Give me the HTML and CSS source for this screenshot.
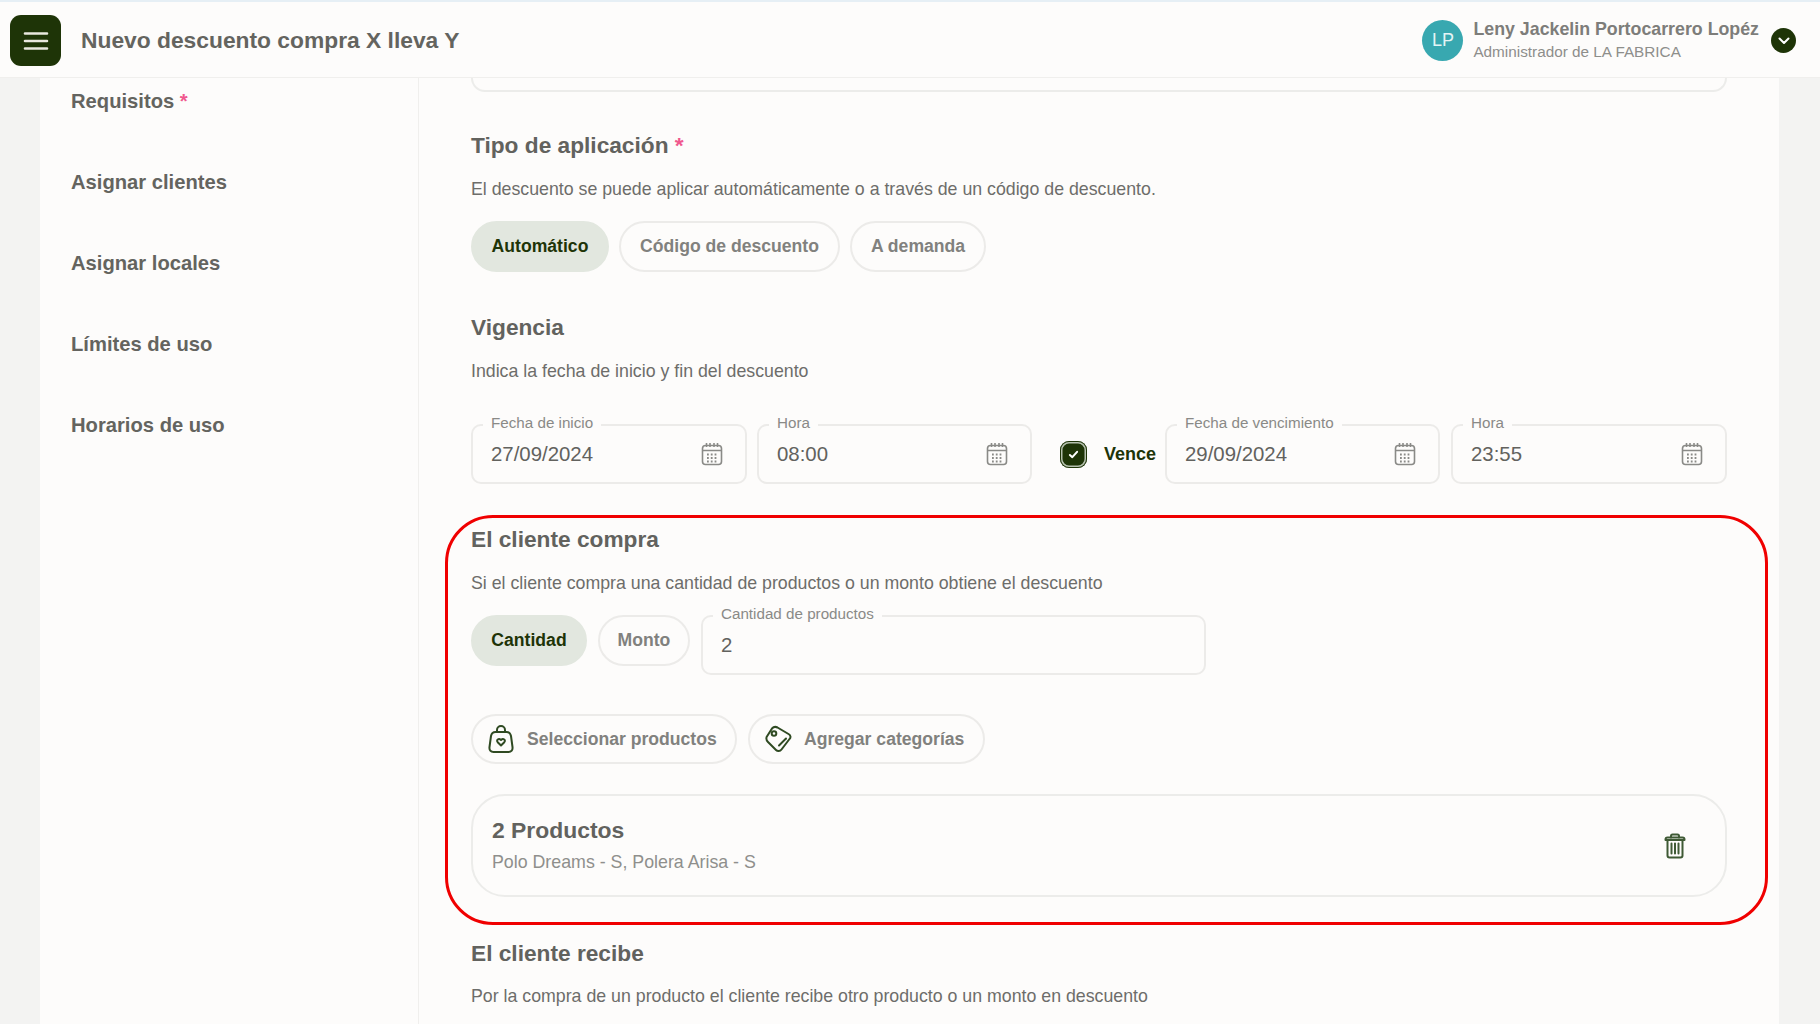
FILE: index.html
```html
<!DOCTYPE html>
<html lang="es">
<head>
<meta charset="utf-8">
<title>Nuevo descuento compra X lleva Y</title>
<link rel="stylesheet" href="styles.css">
</head>
<body>
<header class="topbar">
  <button class="menu-btn" aria-label="Menú">
    <svg width="26" height="20" viewBox="0 0 26 20" fill="none" stroke="#e9e8df" stroke-width="2.6" stroke-linecap="round"><path d="M2 2.5h22M2 10h22M2 17.5h22"/></svg>
  </button>
  <h1 class="page-title">Nuevo descuento compra X lleva Y</h1>
  <div class="user">
    <div class="avatar">LP</div>
    <div class="user-text">
      <div class="user-name">Leny Jackelin Portocarrero Lopéz</div>
      <div class="user-role">Administrador de LA FABRICA</div>
    </div>
    <div class="user-toggle">
      <svg width="12" height="8" viewBox="0 0 12 8" fill="none" stroke="#fff" stroke-width="2" stroke-linecap="round" stroke-linejoin="round"><path d="M1.5 1.5 6 6l4.5-4.5"/></svg>
    </div>
  </div>
</header>

<div class="stage">
  <div class="panel">
    <nav class="side">
      <a class="side-link">Requisitos <span class="req">*</span></a>
      <a class="side-link">Asignar clientes</a>
      <a class="side-link">Asignar locales</a>
      <a class="side-link">Límites de uso</a>
      <a class="side-link">Horarios de uso</a>
    </nav>
    <main class="content">
      <div class="cut-box"></div>

      <section class="sec sec-tipo">
        <h2 class="sec-title">Tipo de aplicación <span class="req">*</span></h2>
        <p class="sec-desc">El descuento se puede aplicar automáticamente o a través de un código de descuento.</p>
        <div class="pills">
          <span class="pill pill-on pill-auto">Automático</span>
          <span class="pill pill-code">Código de descuento</span>
          <span class="pill pill-dem">A demanda</span>
        </div>
      </section>

      <section class="sec sec-vig">
        <h2 class="sec-title">Vigencia</h2>
        <p class="sec-desc">Indica la fecha de inicio y fin del descuento</p>
        <div class="dates">
          <div class="field f-date1"><span class="f-label">Fecha de inicio</span><span class="f-value">27/09/2024</span>
            <svg class="cal" viewBox="0 0 22 24" fill="none" stroke="#8a8a87" stroke-width="1.6"><rect x="1.5" y="3.5" width="19" height="19" rx="3"/><path d="M1.5 8.5h19M5.5 1v4M9 1v4M13 1v4M16.5 1v4"/><path stroke-width="1.8" stroke-dasharray="1.8 2" d="M6 12.5h11M6 16h11M6 19.5h11"/></svg></div>
          <div class="field f-hour1"><span class="f-label">Hora</span><span class="f-value">08:00</span>
            <svg class="cal" viewBox="0 0 22 24" fill="none" stroke="#8a8a87" stroke-width="1.6"><rect x="1.5" y="3.5" width="19" height="19" rx="3"/><path d="M1.5 8.5h19M5.5 1v4M9 1v4M13 1v4M16.5 1v4"/><path stroke-width="1.8" stroke-dasharray="1.8 2" d="M6 12.5h11M6 16h11M6 19.5h11"/></svg></div>
          <label class="vence">
            <span class="check"><svg width="11" height="9" viewBox="0 0 12 10" fill="none" stroke="#fff" stroke-width="2.2" stroke-linecap="round" stroke-linejoin="round"><path d="M2 5.5 4.7 8 10 2"/></svg></span>
            <span class="vence-text">Vence</span>
          </label>
          <div class="field f-date2"><span class="f-label">Fecha de vencimiento</span><span class="f-value">29/09/2024</span>
            <svg class="cal" viewBox="0 0 22 24" fill="none" stroke="#8a8a87" stroke-width="1.6"><rect x="1.5" y="3.5" width="19" height="19" rx="3"/><path d="M1.5 8.5h19M5.5 1v4M9 1v4M13 1v4M16.5 1v4"/><path stroke-width="1.8" stroke-dasharray="1.8 2" d="M6 12.5h11M6 16h11M6 19.5h11"/></svg></div>
          <div class="field f-hour2"><span class="f-label">Hora</span><span class="f-value">23:55</span>
            <svg class="cal" viewBox="0 0 22 24" fill="none" stroke="#8a8a87" stroke-width="1.6"><rect x="1.5" y="3.5" width="19" height="19" rx="3"/><path d="M1.5 8.5h19M5.5 1v4M9 1v4M13 1v4M16.5 1v4"/><path stroke-width="1.8" stroke-dasharray="1.8 2" d="M6 12.5h11M6 16h11M6 19.5h11"/></svg></div>
        </div>
      </section>

      <section class="sec sec-compra">
        <div class="highlight"></div>
        <h2 class="sec-title">El cliente compra</h2>
        <p class="sec-desc">Si el cliente compra una cantidad de productos o un monto obtiene el descuento</p>
        <div class="qty-row">
          <span class="pill pill-on pill-cant">Cantidad</span>
          <span class="pill pill-monto">Monto</span>
          <div class="field f-qty"><span class="f-label">Cantidad de productos</span><span class="f-value">2</span></div>
        </div>
        <div class="pick-row">
          <span class="pill pick pick-prod">
            <svg width="26" height="30" viewBox="0 0 26 30" fill="none" stroke="#2f4a22" stroke-width="2" stroke-linecap="round" stroke-linejoin="round"><path d="M9 8V6a4 4 0 0 1 8 0v2"/><path d="M7.5 8h11c2.5 0 4 1.5 4.5 4l1.5 11c.4 3-1.2 5-4 5H5.5c-2.8 0-4.4-2-4-5L3 12c.5-2.5 2-4 4.5-4z"/><path d="M13 21.5l-3.3-3.3c-1.8-2 .9-4.4 3.3-2.2 2.4-2.200 5.100.2 3.300 2.200z"/></svg>
            Seleccionar productos
          </span>
          <span class="pill pick pick-cat">
            <svg width="28" height="28" viewBox="0 0 28 28" fill="none" stroke="#2f4a22" stroke-width="2" stroke-linecap="round" stroke-linejoin="round"><path d="M8 3.5C9.5 1.8 11.5 1.5 13.5 2.5L24.5 9C26.8 10.3 27 12.5 25.5 14L17.5 24.5C16 26.5 13.5 26.5 12 25L4 17C2.5 15.5 2 14 2.6 12Z"/><circle cx="10" cy="8.5" r="2.3"/><path d="M15 20.5l7-7"/></svg>
            Agregar categorías
          </span>
        </div>
        <div class="sel-card">
          <div class="sel-text">
            <div class="sel-title">2 Productos</div>
            <div class="sel-sub">Polo Dreams - S, Polera Arisa - S</div>
          </div>
          <svg class="trash" width="22" height="26" viewBox="0 0 22 26" fill="none" stroke="#3f5a35" stroke-width="2" stroke-linecap="round" stroke-linejoin="round"><path d="M1.5 6.5c0-1.2.8-2 2-2h15c1.2 0 2 .8 2 2v.5h-19z"/><path d="M7 4.5V3c0-1 .6-1.5 1.5-1.5h5C14.4 1.5 15 2 15 3v1.5"/><path d="M3.5 7v15.5c0 1.2.8 2 2 2h11c1.2 0 2-.8 2-2V7"/><path d="M7.5 10.5v10M11 10.500v10M14.500 10.500v10"/></svg>
        </div>
      </section>

      <section class="sec sec-recibe">
        <h2 class="sec-title">El cliente recibe</h2>
        <p class="sec-desc">Por la compra de un producto el cliente recibe otro producto o un monto en descuento</p>
        <div class="field f-next"><span class="f-label">Cantidad de productos</span></div>
      </section>
    </main>
  </div>
</div>
</body>
</html>
```

FILE: styles.css
```css
* { box-sizing: border-box; }
html, body { height: 100%; }
body {
  margin: 0;
  height: 1024px;
  overflow: hidden;
  display: flex;
  flex-direction: column;
  background: #f3f3f2;
  font-family: "Liberation Sans", Arial, sans-serif;
  color: #5f5f5c;
}

.topbar {
  flex: none;
  height: 78px;
  display: flex;
  align-items: center;
  padding: 2px 24px 0 10px;
  background: #fdfcfb;
  border-top: 2px solid #e6eff5;
  border-bottom: 1px solid #f0efed;
  position: relative;
  z-index: 2;
}
.menu-btn {
  width: 51px;
  height: 51px;
  border: 0;
  padding: 0;
  border-radius: 11px;
  background: #1e3407;
  display: flex;
  align-items: center;
  justify-content: center;
}
.page-title {
  margin: 0 0 0 20px;
  font-size: 22.8px;
  font-weight: 700;
  color: #64645f;
}
.user { margin-left: auto; display: flex; align-items: center; }
.avatar {
  width: 41px;
  height: 41px;
  border-radius: 50%;
  background: #38a8b0;
  color: #e4f4f5;
  font-size: 18px;
  display: flex;
  align-items: center;
  justify-content: center;
}
.user-text { margin-left: 10px; }
.user-name { font-size: 17.8px; font-weight: 700; color: #7d7d7a; line-height: 23px; }
.user-role { font-size: 15.3px; color: #8e8e8b; line-height: 22px; }
.user-toggle {
  width: 25px;
  height: 25px;
  margin-left: 12px;
  border-radius: 50%;
  background: #1e3407;
  display: flex;
  align-items: center;
  justify-content: center;
}

.stage { flex: 1; min-height: 0; padding: 0 41px 0 40px; }
.panel { height: 100%; display: flex; background: #fdfcfb; overflow: hidden; }

.side {
  flex: none;
  width: 379px;
  border-right: 1px solid #f0efed;
  padding: 12px 0 0 31px;
  display: flex;
  flex-direction: column;
  gap: 58px;
}
.side-link { display: block; font-size: 20.2px; line-height: 23px; font-weight: 700; color: #64645f; }
.req { color: #f0588e; font-weight: 700; }

.content { flex: 1; min-width: 0; padding: 0 52px 0 52px; }
.cut-box {
  height: 14px;
  border: 2px solid #ececea;
  border-top: 0;
  border-radius: 0 0 14px 14px;
}

.sec { position: relative; }
.sec-title { margin: 0; font-size: 22.7px; line-height: 28px; font-weight: 700; color: #62625e; }
.sec-desc { margin: 0; font-size: 17.75px; line-height: 22px; color: #6d6d6a; }
.sec-title + .sec-desc { margin-top: 19px; }
.sec-recibe .sec-title + .sec-desc { margin-top: 18px; }

.sec-tipo { margin-top: 39px; }
.sec-vig { margin-top: 41px; }
.sec-compra { margin-top: 41px; }
.sec-recibe { margin-top: 42px; }

.pills { display: flex; gap: 10px; margin-top: 21px; }
.pill {
  flex: none;
  display: flex;
  align-items: center;
  justify-content: center;
  height: 51px;
  border: 2px solid #ecebe9;
  border-radius: 26px;
  font-size: 17.6px;
  font-weight: 700;
  color: #81817e;
}
.pill-on { background: #e2e7df; border-color: #e2e7df; color: #1e3407; }
.pill-auto { width: 138px; }
.pill-code { width: 221px; }
.pill-dem { width: 136px; }

.dates { display: flex; align-items: flex-start; margin-top: 42px; }
.field {
  flex: none;
  position: relative;
  display: flex;
  align-items: center;
  height: 60px;
  padding: 0 18px;
  border: 2px solid #ecebe9;
  border-radius: 10px;
}
.f-label {
  position: absolute;
  left: 10px;
  top: -12px;
  padding: 0 8px;
  background: #fdfcfb;
  font-size: 15.2px;
  line-height: 18px;
  color: #8a8a87;
}
.f-value { font-size: 20.4px; color: #62625e; }
.cal { width: 22px; height: 24px; margin-left: auto; margin-right: 4px; }
.f-date1 { width: 276px; }
.f-hour1 { width: 275px; margin-left: 10px; }
.f-date2 { width: 275px; }
.f-hour2 { width: 276px; margin-left: 11px; }
.vence { flex: none; width: 133px; height: 60px; display: flex; align-items: center; padding-left: 28px; }
.check {
  width: 27px;
  height: 27px;
  border-radius: 9px;
  background: #1e3407;
  box-shadow: inset 0 0 0 1px #1e3407, inset 0 0 0 2.5px #b5c0ae;
  display: flex;
  align-items: center;
  justify-content: center;
}
.vence-text { margin-left: 17px; font-size: 18px; font-weight: 700; color: #1e3407; }

.highlight {
  position: absolute;
  left: -26px;
  right: -41px;
  top: -10px;
  height: 410px;
  border: 3px solid #f00000;
  border-radius: 48px;
  pointer-events: none;
}

.qty-row { display: flex; gap: 11px; margin-top: 21px; }
.pill-cant { width: 116px; }
.pill-monto { width: 92px; }
.f-qty { width: 505px; }

.pick-row { display: flex; gap: 11px; margin-top: 39px; }
.pick { height: 50px; justify-content: flex-start; gap: 13px; padding-left: 15px; }
.pick-prod { width: 266px; }
.pick-cat { width: 237px; gap: 12px; padding-left: 14px; }

.sel-card {
  display: flex;
  align-items: center;
  justify-content: space-between;
  height: 103px;
  margin-top: 30px;
  padding: 0 39px 2px 19px;
  border: 2px solid #ececea;
  border-radius: 34px;
}
.trash { margin-top: 2px; }
.sel-title { font-size: 22.9px; line-height: 28px; font-weight: 700; color: #62625e; }
.sel-sub { margin-top: 7px; font-size: 17.8px; line-height: 22px; color: #8f8f8c; }

.f-next { width: 505px; margin-top: 24px; }
```
